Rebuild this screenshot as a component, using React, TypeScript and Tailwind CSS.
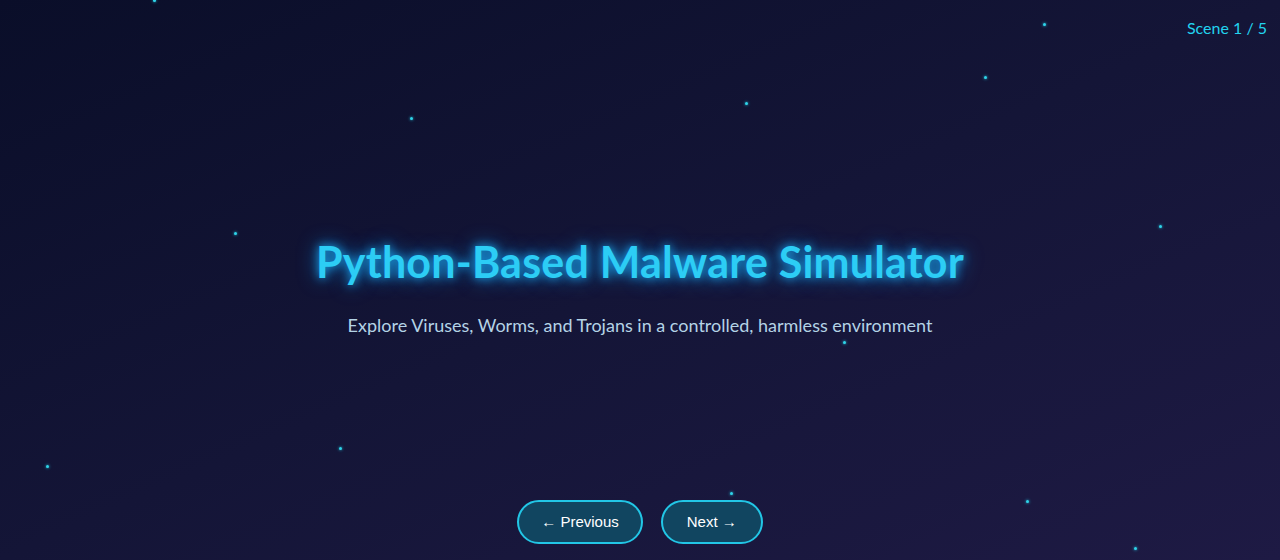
const stars = [
  { x: 153, y: -1, s: 3 },
  { x: 1043, y: 23, s: 3 },
  { x: 984, y: 76, s: 3 },
  { x: 745, y: 102, s: 3 },
  { x: 410, y: 117, s: 3 },
  { x: 234, y: 232, s: 3 },
  { x: 1159, y: 225, s: 3 },
  { x: 843, y: 341, s: 3 },
  { x: 339, y: 447, s: 3 },
  { x: 46, y: 465, s: 3 },
  { x: 730, y: 492, s: 3 },
  { x: 1026, y: 500, s: 3 },
  { x: 1134, y: 547, s: 3 },
]

const App = () => {
  return (
    <div className="relative w-full h-[560px] overflow-hidden bg-gradient-to-br from-[#0a0e29] via-[#141537] to-[#1e1a44] flex flex-col items-center font-['Liberation_Sans',sans-serif]">
      {stars.map((st, i) => (
        <span
          key={i}
          className="absolute rounded-full bg-[#2fd4e8] shadow-[0_0_3px_#22d3ee]"
          style={{ left: st.x, top: st.y, width: st.s, height: st.s }}
        />
      ))}

      <div className="absolute top-[16px] right-[13px] text-[16px] text-[#22d3ee] font-['Lato',sans-serif]">
        Scene 1 / 5
      </div>

      <div className="flex-1 flex flex-col items-center justify-center pt-[69px]">
        <h1 className="text-[43px] font-bold text-[#2ccdf5] font-['Lato',sans-serif] tracking-[0.2px] [text-shadow:0_0_10px_#1ba8f0,0_0_20px_#0e7fd0]">
          Python-Based Malware Simulator
        </h1>
        <p className="mt-[17px] text-[18px] text-[#b4d3e6] font-['Lato',sans-serif]">
          Explore Viruses, Worms, and Trojans in a controlled, harmless environment
        </p>
      </div>

      <div className="flex gap-[18px] mt-auto mb-[16px]">
        <button className="h-[44px] px-[22px] rounded-full border-2 border-[#22c6e6] bg-[#114560] text-white text-[15px]">
          ← Previous
        </button>
        <button className="h-[44px] px-[24px] rounded-full border-2 border-[#22c6e6] bg-[#114560] text-white text-[15px]">
          Next →
        </button>
      </div>
    </div>
  )
}

export default App
